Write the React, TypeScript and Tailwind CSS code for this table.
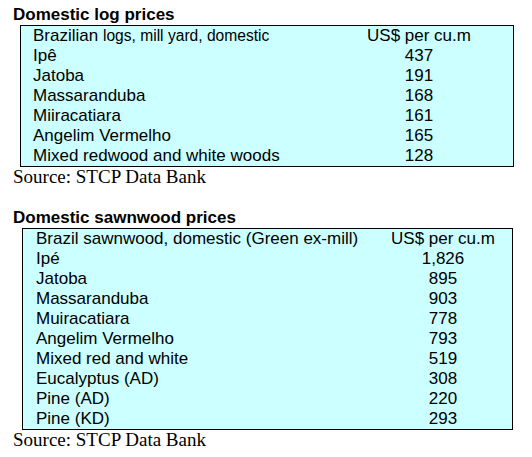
const logRows: [string, string][] = [
  ["Ipê", "437"],
  ["Jatoba", "191"],
  ["Massaranduba", "168"],
  ["Miiracatiara", "161"],
  ["Angelim Vermelho", "165"],
  ["Mixed redwood and white woods", "128"],
];

const sawnRows: [string, string][] = [
  ["Ipé", "1,826"],
  ["Jatoba", "895"],
  ["Massaranduba", "903"],
  ["Muiracatiara", "778"],
  ["Angelim Vermelho", "793"],
  ["Mixed red and white", "519"],
  ["Eucalyptus (AD)", "308"],
  ["Pine (AD)", "220"],
  ["Pine (KD)", "293"],
];

function Title({ children }: { children: string }) {
  return (
    <div className="pl-[13px] text-[17px] leading-[20px] font-bold text-black">{children}</div>
  );
}

function Source() {
  return (
    <div
      className="pl-[13px] text-[19px] leading-[20px] text-black"
      style={{ fontFamily: '"Liberation Serif", "Times New Roman", serif' }}
    >
      Source: STCP Data Bank
    </div>
  );
}

export default function App() {
  return (
    <div
      className="h-[457px] w-[532px] bg-white pt-[5px] text-black"
      style={{ fontFamily: '"Liberation Sans", Arial, sans-serif' }}
    >
      <Title>Domestic log prices</Title>
      <div className="ml-[20px] w-[494px] border border-black bg-[#ccffff] text-[17px] leading-[20px]">
        <div className="grid grid-cols-[338px_120px]">
          <div className="pl-[12px] whitespace-nowrap">
            Brazilian <span className="text-[15.6px]">logs, mill yard, domestic</span>
          </div>
          <div className="text-center">US$ per cu.m</div>
          {logRows.map(([name, price]) => (
            <div key={name} className="contents">
              <div className="pl-[12px]">{name}</div>
              <div className="text-center">{price}</div>
            </div>
          ))}
        </div>
      </div>
      <Source />

      <div className="mt-[21px]">
        <Title>Domestic sawnwood prices</Title>
      </div>
      <div className="ml-[22px] w-[491px] border border-black bg-[#ccffff] text-[17px] leading-[20px]">
        <div className="grid grid-cols-[360px_120px]">
          <div className="pl-[13px] whitespace-nowrap">Brazil sawnwood, domestic (Green ex-mill)</div>
          <div className="text-center">US$ per cu.m</div>
          {sawnRows.map(([name, price]) => (
            <div key={name} className="contents">
              <div className="pl-[13px]">{name}</div>
              <div className="text-center">{price}</div>
            </div>
          ))}
        </div>
      </div>
      <Source />
    </div>
  );
}
